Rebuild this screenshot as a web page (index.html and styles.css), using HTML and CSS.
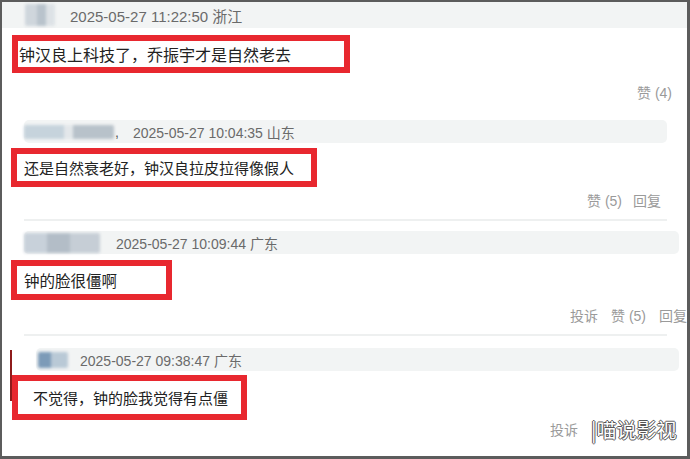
FILE: index.html
```html
<!DOCTYPE html>
<html>
<head>
  <title>评论截图</title>
  <link rel="stylesheet" href="styles.css">
</head>
<body>
  <div class="frame">

    <div class="comment c1">
      <div class="head full">
        <span class="avatar av1"></span>
        <span class="date big">2025-05-27 11:22:50 浙江</span>
      </div>
      <div class="box b1">钟汉良上科技了，乔振宇才是自然老去</div>
      <div class="acts a1"><span>赞 (4)</span></div>
    </div>

    <div class="comment c2">
      <div class="head pill h2">
        <span class="avatar av2"></span><span class="comma">,</span>
        <span class="date">2025-05-27 10:04:35 山东</span>
      </div>
      <div class="box b2">还是自然衰老好，钟汉良拉皮拉得像假人</div>
      <div class="acts a2"><span>赞 (5)</span><span>回复</span></div>
      <div class="sep"></div>
    </div>

    <div class="comment c3">
      <div class="head pill h3">
        <span class="avatar av3"></span>
        <span class="date">2025-05-27 10:09:44 广东</span>
      </div>
      <div class="box b3">钟的脸很僵啊</div>
      <div class="acts a3"><span>投诉</span><span>赞 (5)</span><span>回复</span></div>
      <div class="sep"></div>
    </div>

    <div class="comment c4">
      <div class="head pill h4">
        <span class="avatar av4"></span>
        <span class="date">2025-05-27 09:38:47 广东</span>
      </div>
      <div class="box b4">不觉得，钟的脸我觉得有点僵</div>
      <div class="acts a4"><span>投诉</span><span class="mark">|喵说影视</span></div>
    </div>

  </div>
</body>
</html>
```

FILE: styles.css
```css
html, body { margin: 0; padding: 0; background: #fff; }
body { font-family: "Liberation Sans", Arial, "Noto Sans CJK SC", sans-serif; }

.frame { width: 690px; height: 459px; box-sizing: border-box; border: 2px solid #5c5c5c; border-right-width: 3px; border-bottom-width: 3px; background: #fff; overflow: hidden; }

.head { display: flex; align-items: center; background: #f2f4f4; }
.head.full { height: 26px; padding-left: 23px; }
.head.pill { border-radius: 5px; height: 23px; }
.h2 { margin: 0 20px 0 22px; }
.h3 { margin: 0 8px 0 22px; height: 25px; }
.h4 { margin: 0 8px 0 34px; }

.avatar { display: block; height: 18px; border-radius: 2px; filter: blur(1.6px); }
.av1 { width: 30px; height: 22px; background: linear-gradient(90deg, #cfd6dc 0 40%, #b9c3cc 40% 70%, #dde2e6 70%); }
.av2 { width: 90px; height: 14px; background: linear-gradient(90deg, #c6d3dc 0 45%, #e3e7ea 45% 55%, #b8c2ca 55%); }
.av3 { width: 76px; height: 20px; background: linear-gradient(90deg, #c8d1da 0 30%, #b3bdc7 30% 60%, #c6ced6 60%); }
.av4 { width: 30px; height: 16px; margin-left: 2px; background: linear-gradient(90deg, #7d9bb8 0 45%, #b9c9d6 45%); }
.comma { color: #555; font-size: 14px; margin-left: 1px; }

.date { color: #6a6a6a; font-size: 14px; white-space: nowrap; }
.date.big { font-size: 15px; margin-left: 15px; }
.h2 .date { margin-left: 14px; }
.h3 .date { margin-left: 16px; }
.h4 .date { margin-left: 12px; }

.box { border: 6px solid #e8282f; box-sizing: border-box; color: #222; font-family: "Noto Sans CJK SC", sans-serif; white-space: nowrap; display: flex; align-items: center; }
.b1 { margin: 7px 0 0 10px; width: 338px; height: 38px; font-size: 16px; padding-left: 1px; }
.b2 { margin: 5px 0 0 9px; width: 306px; height: 39px; font-size: 15px; padding-left: 7px; }
.b3 { margin: 6px 0 0 9px; width: 161px; height: 40px; font-size: 15.5px; padding-left: 7px; }
.b4 { margin: 4px 0 0 10px; width: 235px; height: 45px; font-size: 15px; padding-left: 15px; }

.acts { display: flex; color: #9a9a9a; font-size: 14px; font-family: "Liberation Sans", Arial, "Noto Sans CJK SC", sans-serif; white-space: nowrap; height: 18px; align-items: center; }
.a1 { justify-content: flex-end; padding-right: 15px; margin-top: 10px; }
.a2 { justify-content: flex-end; padding-right: 26px; margin-top: 4px; gap: 11px; }
.a3 { padding-left: 568px; margin-top: 6px; gap: 13px; }
.a4 { padding-left: 548px; margin-top: 0; gap: 13px; }

.sep { height: 2px; background: #eef0f0; margin: 10px 20px 0 22px; }

.c2 { margin-top: 19px; }
.c3 { margin-top: 10px; }
.c4 { margin-top: 12px; position: relative; }
.c4::before { content: ""; position: absolute; left: 8px; top: 2px; width: 2px; height: 51px; background: #8e1b1b; }

.mark { color: #fff; font-family: "Noto Sans CJK SC", sans-serif; font-size: 20px; letter-spacing: 0;
  text-shadow: 1px 0 0 #555, -1px 0 0 #555, 0 1px 0 #555, 0 -1px 0 #555; }
```
